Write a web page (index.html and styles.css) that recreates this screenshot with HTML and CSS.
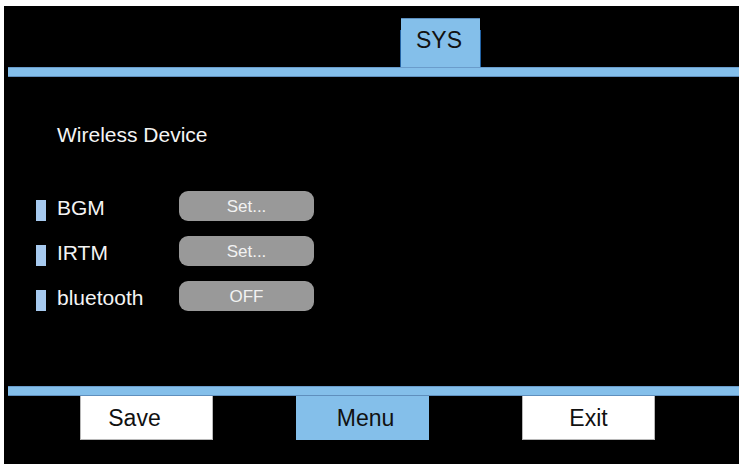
FILE: index.html
```html
<!DOCTYPE html>
<html lang="en">
<head>
  <meta charset="UTF-8" />
  <meta name="viewport" content="width=device-width, initial-scale=1" />
  <title>SYS - Wireless Device</title>
  <link rel="stylesheet" href="styles.css">
</head>
<body>

<div id="screen">
  <div id="tabs">
    <div class="tab-frame">
      <div class="tab active">SYS</div>
    </div>
  </div>
  <div class="rule"></div>

  <div id="content">
    <div class="section-title">Wireless Device</div>

    <div class="setting">
      <span class="marker"></span>
      <span class="label">BGM</span>
      <button class="pill">Set...</button>
    </div>
    <div class="setting">
      <span class="marker"></span>
      <span class="label">IRTM</span>
      <button class="pill">Set...</button>
    </div>
    <div class="setting">
      <span class="marker"></span>
      <span class="label">bluetooth</span>
      <button class="pill">OFF</button>
    </div>
  </div>

  <div class="rule"></div>
  <div id="footer">
    <button class="nav-btn save">Save</button>
    <button class="nav-btn current">Menu</button>
    <button class="nav-btn exit">Exit</button>
  </div>
</div>

</body>
</html>
```

FILE: styles.css
```css
body {
  margin: 0;
  padding: 0;
  background: #ffffff;
  font-family: "Liberation Sans", Arial, sans-serif;
}
#screen {
  margin: 6px 0 0 4px;
  height: 458px;
  background: #000000;
  color: #f4f4f4;
  display: flex;
  flex-direction: column;
}
#tabs {
  height: 61px;
  display: flex;
  align-items: flex-end;
  padding-left: 396px;
}
.tab-frame {
  padding: 0 1px;
  background: linear-gradient(to bottom, transparent 12px, #2262a4 12px);
}
.tab {
  width: 79px;
  height: 49px;
  border-top: 1px solid #5d8fbf;
  background: #84bfea;
  color: #111;
  font-size: 23px;
  line-height: 23px;
  padding: 10px 3px 0 0;
  box-sizing: border-box;
  text-align: center;
}
.rule {
  height: 8px;
  margin-left: 4px;
  background: #84bfea;
  border-top: 1px solid #6a9ccb;
  border-bottom: 1px solid #5f8fbd;
}
#content {
  flex: 1;
  padding: 46px 0 0 32px;
}
.section-title {
  font-size: 21px;
  line-height: 24px;
  padding-left: 21px;
  margin-bottom: 44px;
}
.setting {
  display: flex;
  align-items: flex-start;
  height: 30px;
  margin-bottom: 15px;
}
.marker {
  width: 10px;
  height: 21px;
  margin-top: 9px;
  background: #a7caef;
}
.label {
  width: 122px;
  padding-left: 11px;
  font-size: 21px;
  line-height: 24px;
  margin-top: 5px;
}
.pill {
  width: 135px;
  height: 30px;
  border: none;
  border-radius: 9px;
  background: #999999;
  color: #f2f2f2;
  font-family: "Liberation Sans", Arial, sans-serif;
  font-size: 17px;
  padding: 2px 0 0;
  cursor: pointer;
}
#footer {
  display: flex;
  gap: 83px;
  padding-left: 76px;
  height: 68px;
}
.nav-btn {
  width: 133px;
  height: 44px;
  border: 1px solid #b8b8b8;
  border-top: none;
  background: #ffffff;
  color: #111;
  font-family: "Liberation Sans", Arial, sans-serif;
  font-size: 23px;
  padding: 2px 0 0;
  cursor: pointer;
}
.nav-btn.save {
  padding-right: 24px;
}
.nav-btn.current {
  background: #84bfea;
  border-color: #84bfea;
  padding-left: 6px;
}
.nav-btn.exit {
  margin-left: 10px;
}
```
